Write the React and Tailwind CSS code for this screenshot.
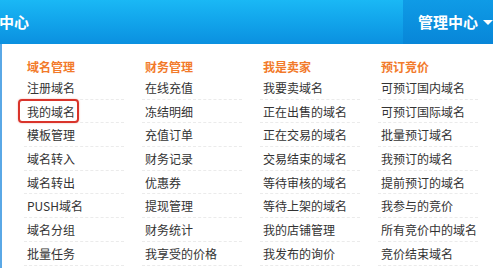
import React from 'react';

const columns = [
  {
    title: '域名管理',
    items: ['注册域名', '我的域名', '模板管理', '域名转入', '域名转出', 'PUSH域名', '域名分组', '批量任务'],
  },
  {
    title: '财务管理',
    items: ['在线充值', '冻结明细', '充值订单', '财务记录', '优惠券', '提现管理', '财务统计', '我享受的价格'],
  },
  {
    title: '我是卖家',
    items: ['我要卖域名', '正在出售的域名', '正在交易的域名', '交易结束的域名', '等待审核的域名', '等待上架的域名', '我的店铺管理', '我发布的询价'],
  },
  {
    title: '预订竞价',
    items: ['可预订国内域名', '可预订国际域名', '批量预订域名', '我预订的域名', '提前预订的域名', '我参与的竞价', '所有竞价中的域名', '竞价结束域名'],
  },
];

const App = () => {
  return (
    <div className="w-[493px] h-[268px] overflow-hidden bg-white" style={{ fontFamily: '"Noto Sans CJK SC", "Noto Sans", sans-serif' }}>
      {/* Top bar */}
      <div className="h-[44px] flex items-stretch bg-gradient-to-b from-[#1ab8f5] to-[#0b90e0] text-white font-bold text-[15px]">
        <div className="flex-1 flex items-center -ml-[1px]">中心</div>
        <div className="w-[90px] flex items-center pl-[15px] gap-[5px] bg-gradient-to-b from-[#0f9be6] to-[#0886d8]">
          <span>管理中心</span>
          <span className="w-0 h-0 border-l-[5px] border-r-[5px] border-t-[5px] border-l-transparent border-r-transparent border-t-white mt-[1px]" />
        </div>
      </div>

      <div className="flex h-[224px]">
        {/* page behind the menu */}
        <div className="w-[3px] flex flex-col bg-[#f7f7f7]">
          <div className="flex-1" />
          <div className="h-[16px] bg-[#2a8fe0]" />
          <div className="h-[6px] bg-[#f0b070]" />
          <div className="h-[6px]" />
        </div>

        {/* Dropdown panel */}
        <div className="flex-1 border-l-2 border-[#5aa8e6] pl-[22px] pt-[14px] flex">
          {columns.map((col, ci) => (
            <div key={col.title} className="w-[118px] shrink-0">
              <div className="h-[18px] leading-[18px] pl-[3px] text-[12px] font-bold text-[#f27a2a]">{col.title}</div>
              <ul>
                {col.items.map((item) => (
                  <li
                    key={item}
                    className="relative w-[100px] h-[23.7px] leading-[23.7px] pl-[3px] text-[12px] text-[#333] border-b border-dashed border-[#ebebeb] whitespace-nowrap"
                  >
                    {item}
                    {ci === 0 && item === '我的域名' && (
                      <span className="absolute left-[-6px] top-[-1px] w-[61px] h-[24px] border-2 border-[#d9342b] rounded-[4px] shadow-[0_0_2px_rgba(217,52,43,0.4)]" />
                    )}
                  </li>
                ))}
              </ul>
            </div>
          ))}
        </div>
      </div>
    </div>
  );
};

export default App;
